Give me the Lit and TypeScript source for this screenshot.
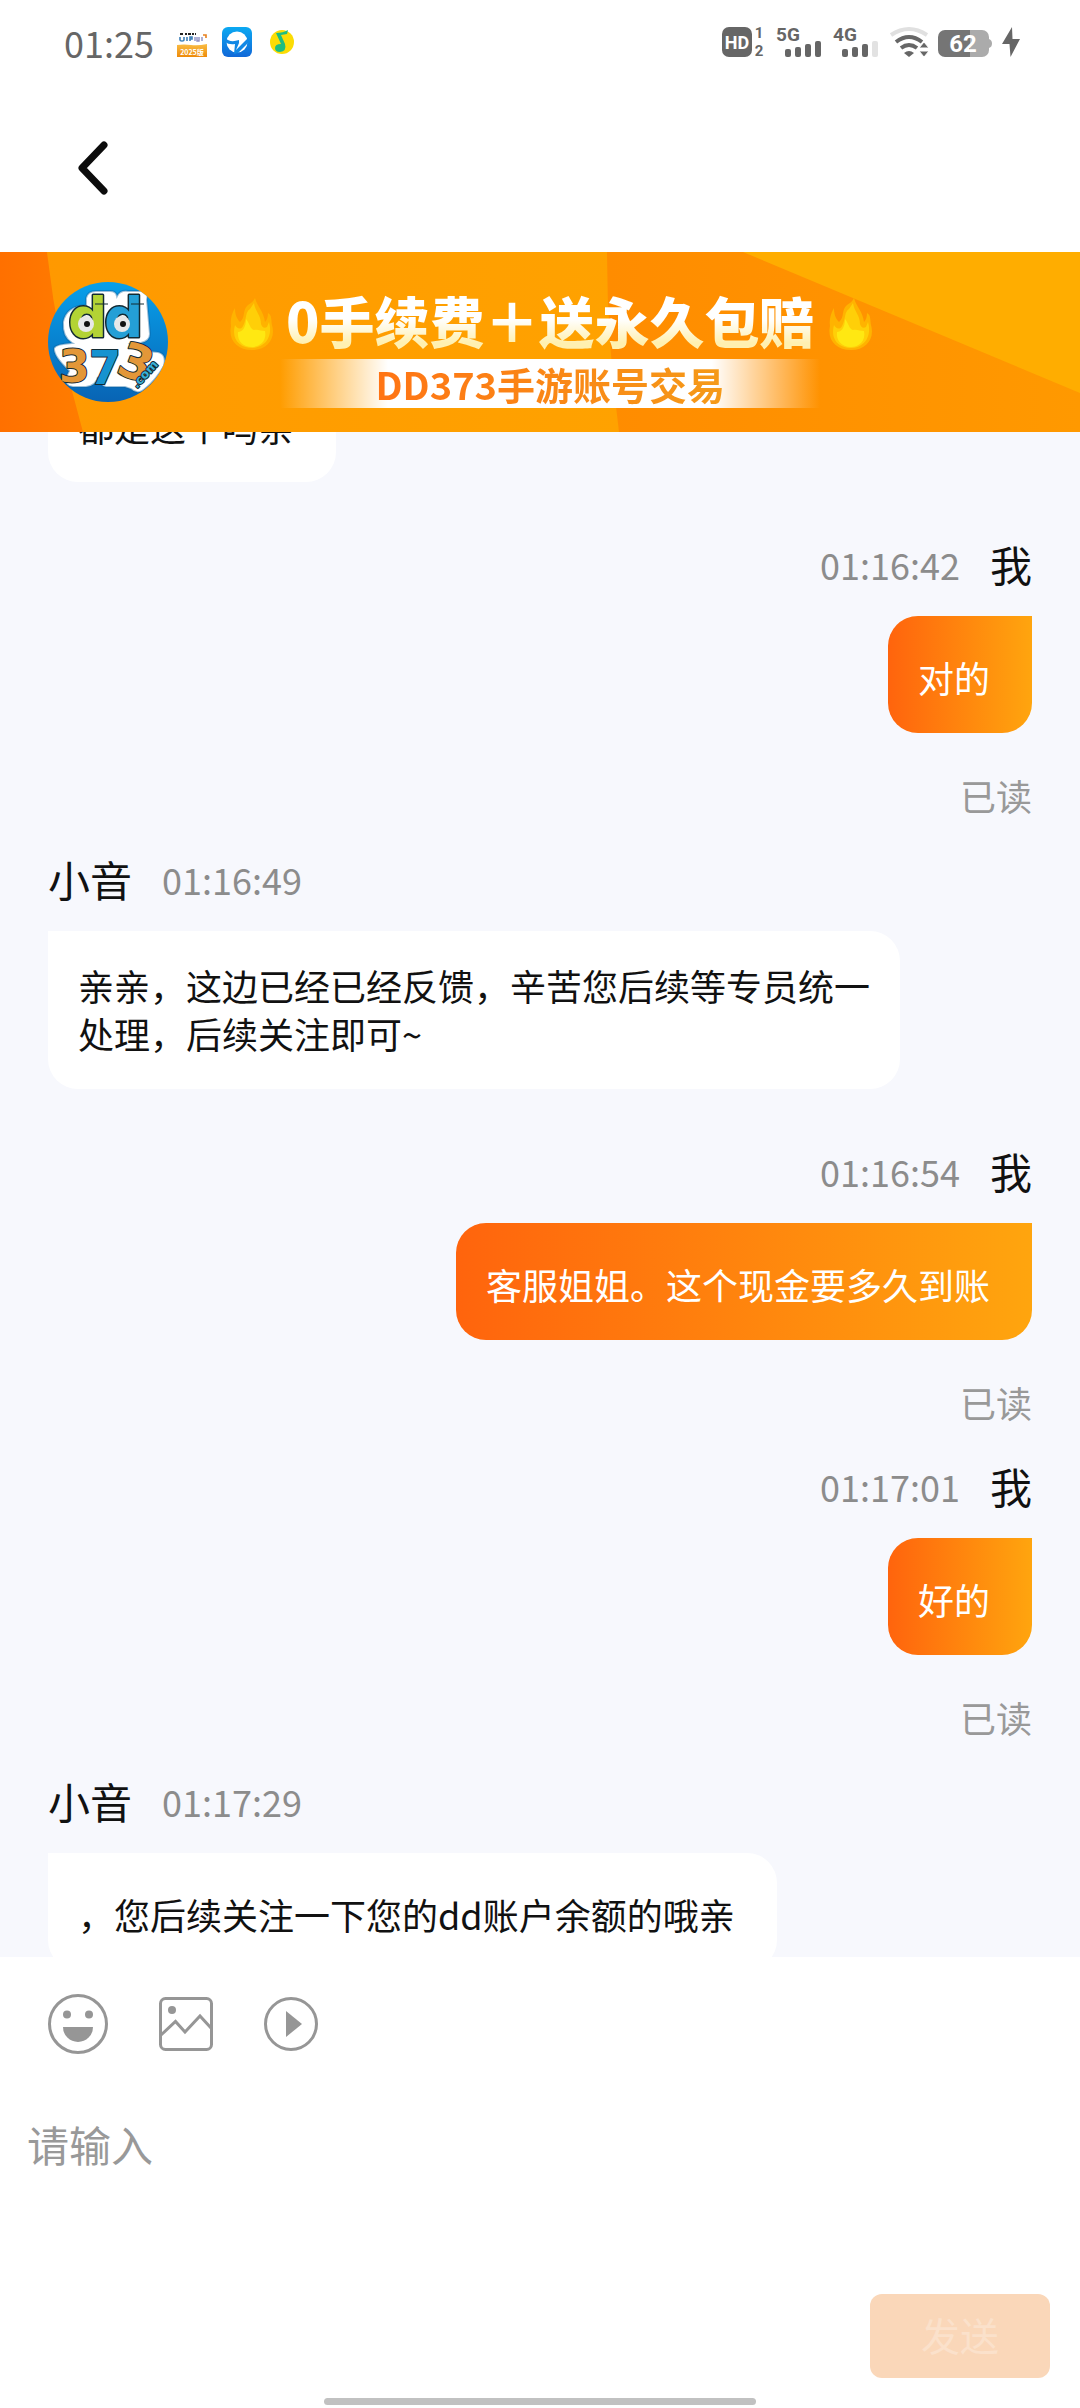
import { LitElement, html, css, svg, nothing } from "lit";
import { customElement, property, state, query } from "lit/decorators.js";
import { classMap } from "lit/directives/class-map.js";

interface Message {
  own: boolean;
  text: string;
  author?: string;
  time?: string;
  read?: boolean;
  long?: boolean;
}

const MESSAGES: Message[] = [
  { own: false, text: "都是这个吗亲" },
  { own: true, author: "我", time: "01:16:42", text: "对的", read: true },
  {
    own: false,
    author: "小音",
    time: "01:16:49",
    text: "亲亲，这边已经已经反馈，辛苦您后续等专员统一处理，后续关注即可~",
    long: true,
  },
  { own: true, author: "我", time: "01:16:54", text: "客服姐姐。这个现金要多久到账", read: true },
  { own: true, author: "我", time: "01:17:01", text: "好的", read: true },
  { own: false, author: "小音", time: "01:17:29", text: "，您后续关注一下您的dd账户余额的哦亲" },
];

@customElement("status-bar")
class StatusBar extends LitElement {
  static styles = css`
    :host {
      display: flex;
      align-items: center;
      justify-content: space-between;
      height: 84px;
      padding: 0 60px 0 64px;
      box-sizing: border-box;
      color: #666;
    }
    .side {
      display: flex;
      align-items: center;
    }
    .apps {
      gap: 15px;
    }
    .system {
      gap: 10px;
    }
    .clock {
      font-size: 36px;
      line-height: 48px;
      margin-right: 8px;
    }
    svg {
      display: block;
      overflow: visible;
      font-family: Roboto, "Liberation Sans", sans-serif;
      font-weight: 700;
    }
  `;

  private bars(dim: number) {
    const tops = [22, 20, 17, 14];
    return tops.map(
      (y, i) => svg`<rect x=${9 + i * 10} y=${y} width="6" height=${30 - y} rx="2"
        fill=${i === dim ? "#e2e2e2" : "#666"} />`
    );
  }

  render() {
    return html`
      <div class="side apps">
        <time class="clock">01:25</time>
        <svg width="30" height="30" viewBox="0 0 30 30" aria-hidden="true">
          <defs>
            <linearGradient id="sun" x1="0" y1="0" x2="0" y2="1">
              <stop offset="0" stop-color="#f9bd45" />
              <stop offset="1" stop-color="#ee8a09" />
            </linearGradient>
          </defs>
          <path d="M3 7h3M8 7h2M11 7h3M15 7h2M18 7h1" stroke="#222" stroke-width="2" />
          <path d="M3 10v3q0 1 2 1t2-1v-3M10 10v4M13 14v-4h2v2h-2" stroke="#3b7fb8" stroke-width="1.6" fill="none" />
          <path d="M18 10v4M20 10v4h2v-4M25 10v4" stroke="#8d8fc4" stroke-width="1.4" fill="none" />
          <path d="M26 8h3v3" stroke="#e8801c" stroke-width="1.6" fill="none" />
          <path d="M0 18q7-1 14 0t16-1v13H0z" fill="url(#sun)" />
          <text x="15" y="28" font-size="7" text-anchor="middle" fill="#fff"
            font-family="Noto Sans CJK SC, sans-serif">2025版</text>
        </svg>
        <svg width="30" height="30" viewBox="0 0 30 30" aria-hidden="true">
          <defs>
            <linearGradient id="sky" x1="0" y1="0" x2="0" y2="1">
              <stop offset="0" stop-color="#0ba9f2" />
              <stop offset="1" stop-color="#1168d8" />
            </linearGradient>
          </defs>
          <rect width="30" height="30" rx="6" fill="url(#sky)" />
          <circle cx="15" cy="15" r="10.500" fill="#fff" />
          <path d="M3 11Q8 16 17 13L17 16L14 23L26 11L27 15L16 26L12 27L13 17Q7 18 3 15Z" fill="#1288e5" />
        </svg>
        <svg width="30" height="30" viewBox="0 0 30 30" aria-hidden="true">
          <circle cx="15" cy="15" r="12" fill="#fbdc05" />
          <path
            d="M21 3L20 7L14 8L18 17Q20 24 13 25Q8 25 8 21Q8 17 14 17L9 6Q16 6 21 3Z"
            fill="#1fbd80"
          />
        </svg>
      </div>
      <div class="side system">
        <svg width="44" height="30" viewBox="0 0 44 30" role="img" aria-label="HD 1 2">
          <rect width="30" height="30" rx="7" fill="#666" />
          <text x="15" y="22" font-size="18" text-anchor="middle" fill="#fff">HD</text>
          <text x="37" y="11" font-size="15" text-anchor="middle" fill="#666">1</text>
          <text x="37" y="29" font-size="15" text-anchor="middle" fill="#666">2</text>
        </svg>
        <svg width="47" height="30" viewBox="0 0 47 30" role="img" aria-label="5G">
          <text x="0" y="14" font-size="19" fill="#666">5G</text>
          ${this.bars(-1)}
        </svg>
        <svg width="47" height="30" viewBox="0 0 47 30" role="img" aria-label="4G">
          <text x="0" y="14" font-size="19" fill="#666">4G</text>
          ${this.bars(3)}
        </svg>
        <svg width="38" height="30" viewBox="0 0 38 30" aria-hidden="true">
          <g fill="none" stroke="#666" stroke-width="4">
            <path d="M1 8Q19-4 37 8" stroke="#e0e0e0" />
            <path d="M6 15Q19 5 32 15" />
            <path d="M11 21Q19 15 27 21" />
          </g>
          <path d="M14 26Q19 22 24 26L19 30Z" fill="#666" />
          <path d="M34 15L39 21H29ZM34 30L39 24H29Z" fill="#666" stroke="#fff" stroke-width="1" />
        </svg>
        <svg width="54" height="30" viewBox="0 0 54 30" role="img" aria-label="62%">
          <defs>
            <clipPath id="cell"><rect y="3" width="51" height="27" rx="7" /></clipPath>
          </defs>
          <g clip-path="url(#cell)">
            <rect width="32" height="30" fill="#757575" />
            <rect x="32" width="20" height="30" fill="#ababab" />
          </g>
          <path d="M51 12q3 1 3 4.500t-3 4.500z" fill="#ababab" />
          <text x="25" y="25" font-size="24" text-anchor="middle" fill="#fff">62</text>
        </svg>
        <svg width="18" height="30" viewBox="0 0 18 30" aria-hidden="true">
          <path d="M10 0L0 17H7.500L8.500 30L18 12H10.500Z" fill="#666" />
        </svg>
      </div>
    `;
  }
}

@customElement("promo-banner")
class PromoBanner extends LitElement {
  static styles = css`
    :host {
      display: flex;
      align-items: center;
      position: relative;
      height: 180px;
      padding-left: 48px;
      box-sizing: border-box;
      background: #ff9b00;
      flex: none;
    }
    .backdrop {
      position: absolute;
      inset: 0;
      width: 100%;
      height: 100%;
    }
    .logo {
      position: relative;
      flex: none;
      display: block;
      font-family: "DejaVu Sans", sans-serif;
      font-weight: 700;
    }
    .copy {
      position: relative;
      display: flex;
      flex-direction: column;
      align-items: center;
      margin-left: 60px;
      padding-top: 13px;
    }
    .headline {
      display: flex;
      align-items: center;
      gap: 12px;
    }
    .title {
      margin: 0;
      padding-bottom: 10px;
      font-size: 55px;
      line-height: 60px;
      font-weight: 900;
      white-space: nowrap;
      color: transparent;
      background: linear-gradient(#fff 43%, #fff0b0 77%);
      -webkit-background-clip: text;
      background-clip: text;
    }
    .ribbon {
      margin: 0;
      width: 540px;
      text-align: center;
      font-size: 38px;
      line-height: 49px;
      font-weight: 700;
      background: linear-gradient(90deg, #fff0, #fff 20%, #fff 80%, #fff0);
    }
    .ribbon span {
      color: transparent;
      background: linear-gradient(90deg, #ff7414, #f59a18);
      -webkit-background-clip: text;
      background-clip: text;
    }
  `;

  private flame() {
    return html`<svg width="46" height="52" viewBox="0 0 46 52" aria-hidden="true">
      <path
        d="M27 0C29 8 36 14 37 24C39 22 40 19 40 15C44 17 43 22 44 27C48 41 39 52 24 52C9 52 0 42 3 28C2 21 4 15 7 10C7 15 8 20 12 24C18 19 14 12 20 7C23 5 26 3 27 0Z"
        fill="#ffb300"
      />
      <path
        d="M26 5C27 13 33 17 33 26C34 29 36 31 39 29L41 24C45 38 38 49 25 50C12 50 3 42 7 27C9 31 13 32 15 28C19 21 17 14 22 11Z"
        fill="#ffcf08"
      />
      <path d="M18 21C22 26 22 31 26 32C30 31 33 33 37 33C39 43 32 49 24 49C14 49 9 42 10 34C14 34 18 30 18 21Z" fill="#ffe812" />
    </svg>`;
  }

  render() {
    return html`
      <svg class="backdrop" viewBox="0 0 1080 180" preserveAspectRatio="none" aria-hidden="true">
        <defs>
          <linearGradient id="left"><stop offset="0" stop-color="#ff7000" /><stop offset="1" stop-color="#ff7d00" /></linearGradient>
          <linearGradient id="mid"><stop offset="0" stop-color="#ff9800" /><stop offset="1" stop-color="#ffa200" /></linearGradient>
          <linearGradient id="right"><stop offset="0" stop-color="#ff8c00" /><stop offset="1" stop-color="#ff9900" /></linearGradient>
        </defs>
        <rect width="620" height="180" fill="url(#mid)" />
        <path d="M0 0H47Q57 90 83 180H0Z" fill="url(#left)" />
        <path d="M607 0H1080V180H619Q607 90 607 0Z" fill="url(#right)" />
        <path d="M743 0H1080V141Z" fill="#ffad00" />
      </svg>
      <svg class="logo" width="120" height="120" viewBox="0 0 120 120" role="img" aria-label="DD373">
        <defs>
          <clipPath id="disc"><circle cx="60" cy="60" r="60" /></clipPath>
          <linearGradient id="sea" x1="0" y1="0" x2="0" y2="1">
            <stop offset="0" stop-color="#08a0ea" /><stop offset="1" stop-color="#0864b4" />
          </linearGradient>
        </defs>
        <g clip-path="url(#disc)">
          <rect width="120" height="120" fill="url(#sea)" />
          <path
            d="M38 16Q40 8 50 9H62Q68 9 69 14Q72 8 80 9H95Q101 10 99 18L102 52Q102 59 93 61L83 62Q98 70 110 70Q119 72 116 84Q108 98 98 106Q90 114 83 107L77 105H58Q52 104 50 95Q48 104 38 105H25Q16 104 18 95L21 89Q5 74 6 66Q8 62 24 61Q14 55 15 40Q18 24 38 23Z"
            fill="#fff" stroke="#0a5e9e" stroke-opacity="0.4" stroke-width="2"
          />
          <g stroke="#122a33" stroke-width="3" paint-order="stroke" stroke-linejoin="round">
            <text x="20" y="55" font-size="55" fill="#b3d335">d</text>
            <text x="56" y="55" font-size="55" fill="#249fd6">d</text>
            <g stroke-width="2">
              <text x="11" y="100" font-size="44" fill="#e39738">3</text>
              <text x="41" y="102" font-size="46" fill="#1693d0">7</text>
              <text x="66" y="91" font-size="48" fill="#e39738" transform="rotate(20 68 93)">3</text>
            </g>
            <text x="89" y="107" font-size="12" stroke-width="2" fill="#38b0d8" transform="rotate(-48 89 107)">.com</text>
          </g>
          <path d="M47 22H60M83 22H96" stroke="#122a33" stroke-width="1" />
          <circle cx="38" cy="42" r="8" fill="#e8e8e8" />
          <circle cx="39" cy="42" r="3" fill="#111" />
          <circle cx="74" cy="42" r="8" fill="#e8e8e8" />
          <circle cx="75" cy="42" r="3" fill="#111" />
        </g>
      </svg>
      <div class="copy">
        <div class="headline">
          ${this.flame()}
          <h1 class="title">0手续费＋送永久包赔</h1>
          ${this.flame()}
        </div>
        <p class="ribbon"><span>DD373手游账号交易</span></p>
      </div>
    `;
  }
}

@customElement("chat-message")
class ChatMessage extends LitElement {
  @property({ attribute: false }) message!: Message;

  static styles = css`
    :host {
      display: block;
    }
    .message {
      display: flex;
      flex-direction: column;
      align-items: flex-start;
      padding-bottom: 54px;
    }
    .own {
      align-items: flex-end;
      padding-bottom: 32px;
    }
    .head {
      display: flex;
      align-items: center;
      gap: 30px;
      height: 56px;
      margin-bottom: 24px;
    }
    .own .head {
      flex-direction: row-reverse;
    }
    .author {
      font-size: 42px;
      line-height: 56px;
      color: #111;
    }
    .time {
      font-size: 36px;
      line-height: 56px;
      color: #8c8c8c;
    }
    .bubble {
      margin: 0;
      box-sizing: border-box;
      max-width: 852px;
      padding: 37px 42px 32px 30px;
      border-radius: 0 30px 30px 30px;
      background: #fff;
      color: #111;
      font-size: 36px;
      line-height: 48px;
    }
    .long {
      padding: 30px 30px 32px;
    }
    .own .bubble {
      border-radius: 30px 0 30px 30px;
      background: linear-gradient(90deg, #ff640d, #ffa50e);
      color: #fff;
    }
    .read {
      margin-top: 38px;
      font-size: 36px;
      line-height: 48px;
      color: #999;
    }
  `;

  render() {
    const m = this.message;
    return html`
      <article class=${classMap({ message: true, own: m.own })}>
        ${m.author
          ? html`<header class="head">
              <span class="author">${m.author}</span>
              <time class="time">${m.time}</time>
            </header>`
          : nothing}
        <p class=${classMap({ bubble: true, long: !!m.long })}>${m.text}</p>
        ${m.read ? html`<span class="read">已读</span>` : nothing}
      </article>
    `;
  }
}

@customElement("message-composer")
class MessageComposer extends LitElement {
  @state() private draft = "";

  static styles = css`
    :host {
      display: flex;
      flex-direction: column;
      flex: none;
      background: #fff;
      padding-top: 37px;
    }
    .tools {
      display: flex;
      align-items: center;
      gap: 51px;
      height: 60px;
      padding: 0 48px;
    }
    button {
      border: 0;
      padding: 0;
      background: none;
      font: inherit;
      cursor: pointer;
    }
    svg {
      display: block;
    }
    .input {
      height: 180px;
      margin: 60px 27px 0;
      padding: 0;
      border: 0;
      outline: 0;
      resize: none;
      background: none;
      font: inherit;
      font-size: 42px;
      line-height: 60px;
      color: #111;
    }
    .input::placeholder {
      color: #999;
      opacity: 1;
    }
    .send {
      align-self: flex-end;
      width: 180px;
      height: 84px;
      margin-right: 30px;
      padding-bottom: 4px;
      border-radius: 12px;
      background: #f77f1d;
      color: #fff;
      font-size: 39px;
    }
    .send:disabled {
      background: #fad7b9;
      color: #fbe1cb;
    }
    .home {
      align-self: center;
      width: 40%;
      height: 7px;
      margin: 20px 0 3px;
      border-radius: 4px;
      background: #c1c1c1;
    }
  `;

  render() {
    return html`
      <div class="tools">
        <button type="button" aria-label="表情">
          <svg width="60" height="60" viewBox="0 0 60 60">
            <circle cx="30" cy="30" r="28.500" fill="none" stroke="#969696" stroke-width="3" />
            <circle cx="19" cy="20.500" r="4" fill="#969696" />
            <circle cx="41" cy="20.500" r="4" fill="#969696" />
            <path d="M15 33H45A15 15 0 0 1 15 33Z" fill="#969696" />
          </svg>
        </button>
        <button type="button" aria-label="图片">
          <svg width="54" height="54" viewBox="0 0 54 54" fill="none" stroke="#969696" stroke-width="3">
            <rect x="1.500" y="1.500" width="51" height="51" rx="5" />
            <path d="M2 38L16.500 24.500L26 35L41 19L52 31" />
            <circle cx="13" cy="13" r="4" fill="#969696" stroke="none" />
          </svg>
        </button>
        <button type="button" aria-label="视频">
          <svg width="54" height="54" viewBox="0 0 54 54">
            <circle cx="27" cy="27" r="25.500" fill="none" stroke="#969696" stroke-width="3" />
            <path d="M22 14V40L38 27Z" fill="#969696" />
          </svg>
        </button>
      </div>
      <textarea
        class="input"
        aria-label="请输入"
        placeholder="请输入"
        .value=${this.draft}
        @input=${(e: Event) => (this.draft = (e.target as HTMLTextAreaElement).value)}
      ></textarea>
      <button class="send" type="button" ?disabled=${!this.draft}>发送</button>
      <div class="home"></div>
    `;
  }
}

@customElement("app-root")
class AppRoot extends LitElement {
  @query(".log") private log!: HTMLElement;

  static styles = css`
    :host {
      display: flex;
      flex-direction: column;
      height: 100vh;
      overflow: hidden;
      background: #fff;
      font-family: "Noto Sans CJK SC", sans-serif;
    }
    .nav {
      display: flex;
      align-items: center;
      height: 168px;
      padding: 0 78px;
      flex: none;
    }
    .back {
      border: 0;
      padding: 0;
      background: none;
      cursor: pointer;
    }
    .back svg {
      display: block;
    }
    .log {
      flex: 1;
      min-height: 0;
      overflow-y: auto;
      scrollbar-width: none;
      padding: 0 48px;
      background: #f7f8fd;
    }
  `;

  async firstUpdated() {
    const rows = [...this.log.querySelectorAll("chat-message")] as LitElement[];
    await Promise.all(rows.map((row) => row.updateComplete));
    this.log.scrollTop = 67;
  }

  render() {
    return html`
      <status-bar></status-bar>
      <nav class="nav">
        <button class="back" type="button" aria-label="返回">
          <svg width="30" height="54" viewBox="0 0 30 54" fill="none" stroke="#0c0c0c" stroke-width="7"
            stroke-linecap="round" stroke-linejoin="round">
            <path d="M26 4L4 27L26 50" />
          </svg>
        </button>
      </nav>
      <promo-banner></promo-banner>
      <main class="log">
        ${MESSAGES.map((m) => html`<chat-message .message=${m}></chat-message>`)}
      </main>
      <message-composer></message-composer>
    `;
  }
}
